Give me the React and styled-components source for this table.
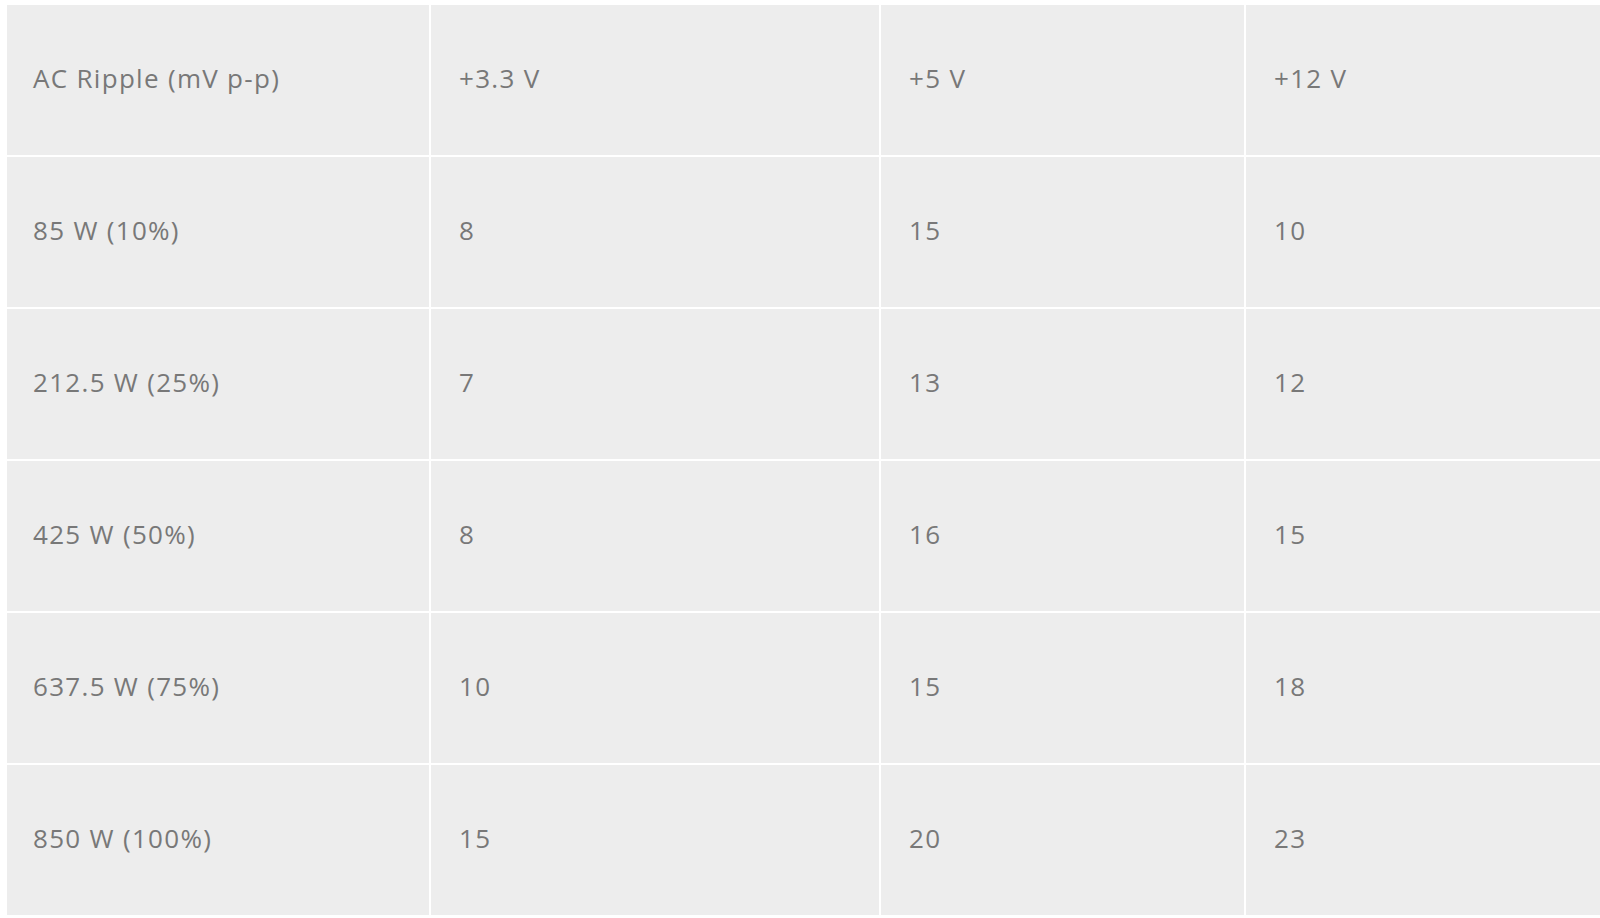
import React from 'react';
import styled, { createGlobalStyle } from 'styled-components';

const GlobalStyle = createGlobalStyle`
  body {
    margin: 0;
    background: #ffffff;
    overflow: hidden;
    font-family: "Open Sans", "Liberation Sans", sans-serif;
  }
`;

const Page = styled.div`
  padding: 5px 0 0 7px;
`;

const Grid = styled.div`
  display: grid;
  grid-template-columns: 422px 448px 363px 400px;
  grid-auto-rows: 150px;
  gap: 2px;
  width: 1639px;
`;

const Cell = styled.div`
  background: #ededed;
  display: flex;
  align-items: center;
  padding: 0 0 4px ${(p) => (p.first ? '26px' : '28px')};
  color: #787878;
  font-size: 26px;
  letter-spacing: 1.3px;
`;

const rows = [
  ['AC Ripple (mV p-p)', '+3.3 V', '+5 V', '+12 V'],
  ['85 W (10%)', '8', '15', '10'],
  ['212.5 W (25%)', '7', '13', '12'],
  ['425 W (50%)', '8', '16', '15'],
  ['637.5 W (75%)', '10', '15', '18'],
  ['850 W (100%)', '15', '20', '23'],
];

export default function App() {
  return (
    <>
      <GlobalStyle />
      <Page>
        <Grid>
          {rows.map((row, r) =>
            row.map((text, c) => (
              <Cell key={`${r}-${c}`} first={c === 0}>
                {text}
              </Cell>
            ))
          )}
        </Grid>
      </Page>
    </>
  );
}
